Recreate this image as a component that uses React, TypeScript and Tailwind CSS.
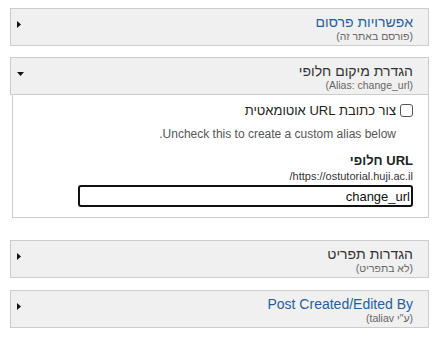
import React from "react";

type PanelHeaderProps = {
  title: string;
  subtitle: string;
  open?: boolean;
  titleClass?: string;
};

function Caret({ open }: { open?: boolean }) {
  return open ? (
    <svg width="7" height="5" viewBox="0 0 7 5" className="mt-[9px]">
      <path d="M0 0 L7 0 L3.5 4 Z" fill="#111" />
    </svg>
  ) : (
    <svg width="4" height="7" viewBox="0 0 4 7" className="mt-[7px]">
      <path d="M0 0 L4 3.5 L0 7 Z" fill="#111" />
    </svg>
  );
}

function PanelHeader({ title, subtitle, open, titleClass = "text-[#1f5ea6]" }: PanelHeaderProps) {
  return (
    <div className="flex items-start justify-between border border-[#cccccc] bg-[#f0f0f0] pr-[15px] pl-[6px] pt-[5px] pb-[3px]">
      <div className="flex flex-col">
        <div className={`text-[14px] leading-[16px] ${titleClass}`}>{title}</div>
        <div className="text-[10.5px] leading-[12px] text-[#666666]">{subtitle}</div>
      </div>
      <Caret open={open} />
    </div>
  );
}

export default function App() {
  return (
    <div
      dir="rtl"
      className="w-[443px] h-[349px] bg-white pt-[8px] pl-[10px] pr-[14px]"
      style={{ fontFamily: '"Liberation Sans", Arial, sans-serif' }}
    >
      {/* Publish options */}
      <PanelHeader title="אפשרויות פרסום" subtitle="(פורסם באתר זה)" />

      {/* Alias */}
      <div className="mt-[11px]">
        <PanelHeader
          title="הגדרת מיקום חלופי"
          subtitle="(Alias: change_url)"
          open
          titleClass="text-[#333333]"
        />
        <div className="ml-[2px] border border-t-0 border-[#cccccc] pr-[15px] pt-[8px] pb-[10px]">
          <label className="flex items-center gap-[4px] text-[13px] leading-[15px] text-[#222222]">
            <span className="h-[13px] w-[13px] rounded-[3px] border border-[#555555] bg-white" />
            <span>צור כתובת URL אוטומאטית</span>
          </label>
          <div className="mt-[9px] pr-[17px] text-[12px] leading-[14px] text-[#555555]">
            Uncheck this to create a custom alias below.
          </div>
          <div className="mt-[12px] text-[13px] leading-[15px] font-bold text-[#222222]">URL חלופי</div>
          <div className="mt-[2px] text-[11px] leading-[13px] text-[#333333]">https://ostutorial.huji.ac.il/</div>
          <div className="mt-[2px] flex h-[22px] w-[335px] items-center rounded-[3px] border-2 border-[#111111] bg-white px-[1px] text-[13px] leading-[15px] text-[#111111]">
            change_url
          </div>
        </div>
      </div>

      {/* Menu settings */}
      <div className="mt-[22px]">
        <PanelHeader title="הגדרות תפריט" subtitle="(לא בתפריט)" titleClass="text-[#333333]" />
      </div>

      {/* Authoring */}
      <div className="mt-[12px]">
        <PanelHeader title="Post Created/Edited By" subtitle={'(ע"י taliav)'} />
      </div>
    </div>
  );
}
